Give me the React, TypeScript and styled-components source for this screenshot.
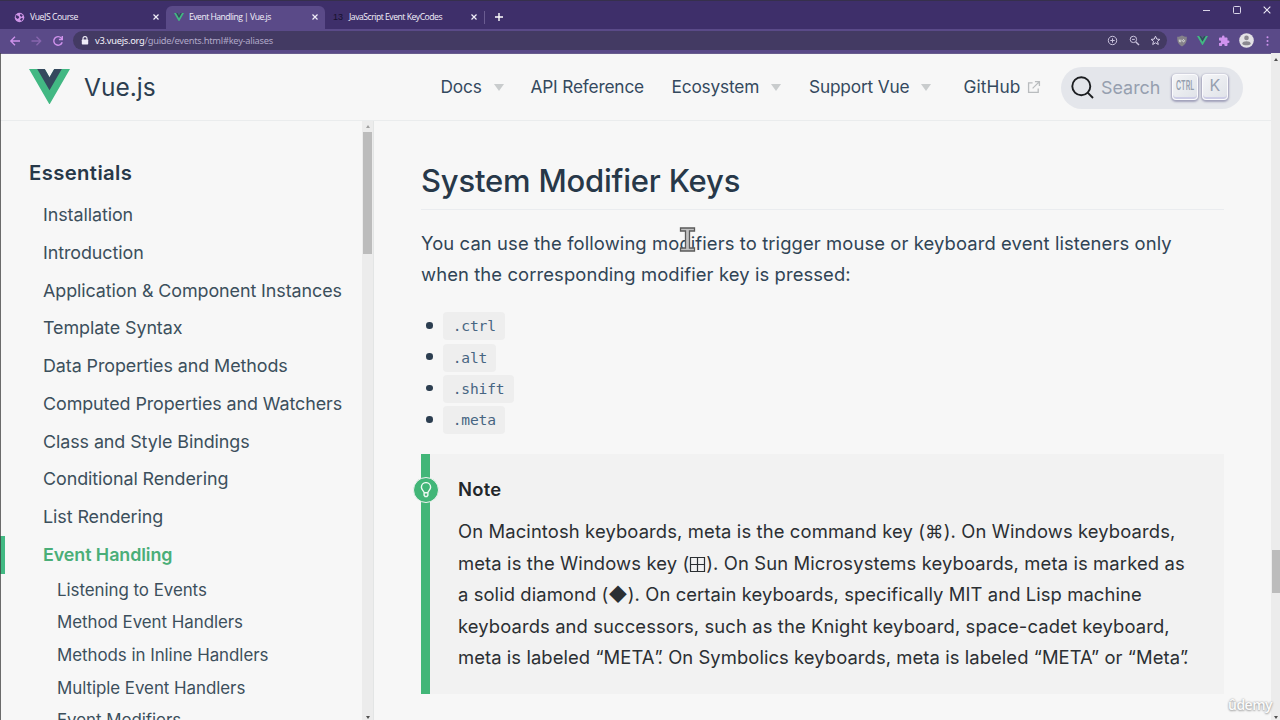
import React from "react";
import styled, { createGlobalStyle } from "styled-components";

const Global = createGlobalStyle`
  * { box-sizing: border-box; }
  html, body { margin: 0; padding: 0; }
  body { font-family: Inter, "Liberation Sans", sans-serif; color: #304455; background: #f7f7f7; overflow: hidden; }
`;

const Window = styled.div`
  width: 1280px;
  height: 720px;
  display: flex;
  flex-direction: column;
  overflow: hidden;
  position: relative;
  background: #f7f7f7;
`;

/* Browser chrome */
const TabStrip = styled.div`
  height: 29px;
  flex: none;
  display: flex;
  align-items: flex-end;
  padding-left: 6px;
  background: #3e2f6a;
  border-top: 1px solid #36304c;
  font-family: "Open Sans", sans-serif;
`;
const Tab = styled.div<{ $active?: boolean; $w: number }>`
  width: ${(p) => p.$w}px;
  height: 23px;
  display: flex;
  align-items: center;
  padding: 0 7px 1px 8px;
  border-radius: 6px 6px 0 0;
  color: #f4f1fb;
  background: ${(p) => (p.$active ? "#5a4a88" : "transparent")};
  svg { flex: none; display: block; }
`;
const TabTitle = styled.span<{ $ls: number }>`
  flex: 1;
  margin-left: 5px;
  font-size: 8.6px;
  line-height: 14px;
  letter-spacing: ${(p) => p.$ls}px;
  white-space: nowrap;
`;
const TabNumber = styled.span`
  width: 11px;
  font: 9px "Liberation Sans", sans-serif;
  color: #17112e;
`;
const Divider = styled.div`
  width: 1px;
  height: 13px;
  margin: 0 10px 5px 0;
  background: #6a5c91;
`;
const NewTab = styled.div`
  height: 23px;
  display: flex;
  align-items: center;
  padding-bottom: 1px;
`;
const WindowButtons = styled.div`
  margin-left: auto;
  display: flex;
  align-items: center;
  gap: 22px;
  height: 18px;
  margin-bottom: 10px;
  padding-right: 9.5px;
`;
const Toolbar = styled.div`
  height: 25px;
  flex: none;
  display: flex;
  align-items: center;
  padding: 0 6px 1px 8px;
  background: #5a4a88;
  border-bottom: 1px solid #685c8d;
  svg { flex: none; display: block; }
`;
const NavButtons = styled.div`
  display: flex;
  gap: 8px;
  width: 65px;
`;
const AddressBar = styled.div`
  width: 1094px;
  height: 19px;
  border-radius: 10px;
  background: #433a63;
  display: flex;
  align-items: center;
  padding: 0 6px 0 8px;
`;
const Url = styled.span`
  margin-left: 6px;
  font: 9.3px/14px "Noto Sans", sans-serif;
  letter-spacing: -0.26px;
  color: #b0a8c8;
  b { font-weight: 400; color: #f6f4fb; }
`;
const AddressIcons = styled.div`
  margin-left: auto;
  display: flex;
  align-items: center;
  gap: 10.4px;
`;
const Extensions = styled.div`
  margin-left: 9px;
  display: flex;
  align-items: center;
  gap: 9.3px;
`;

/* Site header */
const Header = styled.header`
  height: 67px;
  flex: none;
  display: flex;
  border-bottom: 1px solid #eaeced;
  margin-right: 9px;
  padding-left: 29px;
  align-items: center;
`;
const Brand = styled.div`
  display: flex;
  align-items: center;
  gap: 14px;
  width: 411.5px;
  svg { display: block; margin-top: -1px; }
`;
const BrandName = styled.span`
  font-size: 24.5px;
  font-weight: 400;
  line-height: 32px;
  color: #2c3e50;
  letter-spacing: 0;
`;
const NavItem = styled.div<{ $w: number }>`
  width: ${(p) => p.$w}px;
  display: flex;
  align-items: center;
  font-size: 17.3px;
  line-height: 26px;
  color: #34495e;
  white-space: nowrap;
`;
const NavLabel = styled.span<{ $ls?: number }>`
  letter-spacing: ${(p) => p.$ls ?? -0.18}px;
`;
const Caret = styled.i`
  margin-left: 12px;
  border: 5px solid transparent;
  border-top: 7px solid #c9cccd;
  border-bottom: 0;
`;
const Search = styled.div`
  width: 182px;
  height: 42px;
  margin-top: 1px;
  border-radius: 21px;
  background: #e4e6eb;
  display: flex;
  align-items: center;
  padding-left: 10px;
  svg { display: block; }
`;
const SearchText = styled.span`
  margin-left: 7.5px;
  width: 71px;
  font-size: 17.9px;
  line-height: 26px;
  letter-spacing: 0;
  color: #969faf;
`;
const Key = styled.kbd<{ $narrow?: boolean }>`
  width: 25.5px;
  height: 26px;
  margin: -2px 4.5px 0 0;
  display: flex;
  align-items: center;
  justify-content: center;
  border-radius: 4px;
  border: 1px solid #fbfbfd;
  background: linear-gradient(-45deg, #dfe2e8, #f4f5f7);
  box-shadow: inset 0 -2px 0 #cdcde6, 0 1px 2px 1px rgba(70, 66, 120, 0.42);
  color: #969faf;
  font-family: Inter, sans-serif;
  font-size: ${(p) => (p.$narrow ? 10 : 16)}px;
  font-weight: ${(p) => (p.$narrow ? 600 : 400)};
  span { display: block; margin-top: -4px; transform: ${(p) => (p.$narrow ? "scale(0.7, 1.25)" : "none")}; }
`;

/* Page body */
const Body = styled.div`
  flex: 1;
  min-height: 0;
  display: flex;
`;
const Sidebar = styled.aside`
  width: 362px;
  flex: none;
  overflow: hidden;
  padding-top: 36px;
`;
const SideTitle = styled.h3`
  margin: 0 0 7px 29px;
  height: 32px;
  font-size: 20.3px;
  line-height: 32px;
  font-weight: 600;
  letter-spacing: 0.38px;
  color: #273849;
`;
const SideLink = styled.div<{ $active?: boolean }>`
  height: 37.77px;
  line-height: 37.77px;
  padding-left: ${(p) => (p.$active ? 38 : 43)}px;
  border-left: ${(p) => (p.$active ? "5px solid #42b983" : "0")};
  font-size: 17.9px;
  font-weight: ${(p) => (p.$active ? 600 : 400)};
  letter-spacing: -0.08px;
  color: ${(p) => (p.$active ? "#4aae78" : "#3c4f5c")};
  white-space: nowrap;
`;
const SubLink = styled.div`
  height: 32.7px;
  line-height: 32.7px;
  padding-left: 57px;
  font-size: 16.9px;
  letter-spacing: -0.04px;
  color: #3c4f5c;
  white-space: nowrap;
`;
const SideScroll = styled.div`
  width: 12px;
  flex: none;
  background: #ececec;
  border-right: 1px solid #e3e5e5;
  display: flex;
  flex-direction: column;
  align-items: center;
  padding: 4px 0 1px;
`;
const Thumb = styled.div<{ $h: number; $w: number }>`
  width: ${(p) => p.$w}px;
  height: ${(p) => p.$h}px;
  background: #bcbcbc;
`;
const Arrow = styled.i<{ $down?: boolean; $dark?: boolean }>`
  width: 0;
  height: 0;
  border-left: 2.5px solid transparent;
  border-right: 2.5px solid transparent;
  ${(p) => (p.$down ? "border-top" : "border-bottom")}: 3px solid ${(p) => (p.$dark ? "#505050" : "#a0a0a0")};
`;
const PageScroll = styled.div`
  position: absolute;
  right: 0;
  top: 53px;
  bottom: 0;
  width: 9px;
  background: #ececec;
  display: flex;
  flex-direction: column;
  align-items: center;
  padding: 5px 0 1px;
`;
const Spacer = styled.div<{ $h?: number }>`
  ${(p) => (p.$h ? `height: ${p.$h}px;` : "flex: 1;")}
`;
const Main = styled.main`
  width: 850px;
  padding: 37px 0 0 47px;
`;
const Heading = styled.h2`
  margin: 0;
  height: 52px;
  border-bottom: 1px solid #eaecef;
  font-size: 31px;
  line-height: 46px;
  font-weight: 500;
  letter-spacing: -0.2px;
  color: #273849;
`;
const Para = styled.div`
  margin-top: 18px;
  color: #304455;
`;
const Line = styled.div<{ $ls?: number }>`
  height: 31.35px;
  line-height: 31.35px;
  font-size: 18.4px;
  letter-spacing: ${(p) => p.$ls ?? 0.11}px;
  white-space: nowrap;
`;
const TightQuote = styled.span`
  letter-spacing: -5.2px;
`;
const List = styled.ul`
  list-style: none;
  margin: 20px 0 0;
  padding: 0;
`;
const Item = styled.li`
  height: 31.3px;
  display: flex;
  align-items: center;
  padding-left: 5px;
  &::before {
    content: "";
    width: 6.6px;
    height: 6.6px;
    margin: -2px 10.9px 0 0;
    border-radius: 50%;
    background: #2c3e50;
  }
`;
const Code = styled.code`
  height: 28px;
  line-height: 28px;
  padding: 0 9.2px;
  border-radius: 4px;
  background: #eeeeee;
  font-family: "DejaVu Sans Mono", monospace;
  font-size: 14.6px;
  letter-spacing: -0.15px;
  color: #476582;
`;
const Note = styled.section`
  position: relative;
  margin-top: 18.1px;
  height: 240px;
  padding: 19px 0 0 28px;
  border-left: 9.5px solid #42b678;
  background: #f2f2f2;
  color: #2b2f33;
`;
const NoteTitle = styled.div`
  height: 34px;
  line-height: 34px;
  margin: -0.5px 0 10px;
  font-size: 18.4px;
  font-weight: 600;
  letter-spacing: 0.25px;
  color: #22262a;
`;
const NoteBadge = styled.div`
  position: absolute;
  left: -17.5px;
  top: 23px;
  width: 26px;
  height: 26px;
  border-radius: 50%;
  border: 1.5px solid #f2f2f2;
  background: #42b678;
  display: flex;
  align-items: center;
  justify-content: center;
`;
const SquareGlyph = styled.svg`
  width: 17px;
  height: 17px;
  vertical-align: -3px;
`;
const ExternalIcon = styled.svg`
  margin-left: 7px;
`;
const Cursor = styled.svg`
  position: absolute;
  left: 679px;
  top: 226px;
`;
const Watermark = styled.div`
  position: absolute;
  left: 1228px;
  top: 695px;
  font: 600 14px/20px "Open Sans", sans-serif;
  letter-spacing: -0.5px;
  color: #fbfbfb;
  text-shadow: 0 0 2px #999, 0 1px 2px #aaa;
`;
const WindowEdge = styled.div`
  position: absolute;
  left: 0;
  top: 53px;
  bottom: 0;
  width: 1px;
  background: rgba(60, 60, 60, 0.75);
`;

const VueLogo = ({ size }: { size: number }) => (
  <svg width={size} height={size * 0.866} viewBox="0 0 196.32 170.02">
    <path fill="#42b883" d="M120.83 0 98.16 39.26 75.49 0H0l98.16 170.02L196.32 0z" />
    <path fill="#35495e" d="M120.83 0 98.16 39.26 75.49 0H39.26l58.9 102.01L157.06 0z" />
  </svg>
);
const CloseX = ({ size = 6 }: { size?: number }) => (
  <svg width={size} height={size} viewBox="0 0 6 6" stroke="#f0edf8" strokeWidth={size > 7 ? 0.8 : 1.2}>
    <path d="M.5.5l5 5M5.5.5l-5 5" />
  </svg>
);

const links = [
  "Installation",
  "Introduction",
  "Application & Component Instances",
  "Template Syntax",
  "Data Properties and Methods",
  "Computed Properties and Watchers",
  "Class and Style Bindings",
  "Conditional Rendering",
  "List Rendering",
];
const subLinks = [
  "Listening to Events",
  "Method Event Handlers",
  "Methods in Inline Handlers",
  "Multiple Event Handlers",
  "Event Modifiers",
];

export default function App() {
  return (
    <Window>
      <Global />
      <TabStrip>
        <Tab $w={160}>
          <svg width="11" height="11" viewBox="0 0 12 12">
            <circle cx="6" cy="6" r="5.2" fill="#cf94e8" />
            <path d="M2 3.4l3 1 .6 1.8-1.7 1.4-2-1.5zM7 2l2.6 1.5L8.2 5.4 6.5 4zM6.5 8l2-1.8 1.4 1.2-2 2.3z" fill="#3e2f6a" />
          </svg>
          <TabTitle $ls={-0.4}>VueJS Course</TabTitle>
          <CloseX />
        </Tab>
        <Tab $w={159} $active>
          <VueLogo size={10} />
          <TabTitle $ls={-0.5}>Event Handling | Vue.js</TabTitle>
          <CloseX />
        </Tab>
        <Tab $w={159}>
          <TabNumber>13</TabNumber>
          <TabTitle $ls={-0.47}>JavaScript Event KeyCodes</TabTitle>
          <CloseX />
        </Tab>
        <Divider />
        <NewTab>
          <svg width="8" height="8" viewBox="0 0 8 8" stroke="#fff" strokeWidth="1.4">
            <path d="M4 0v8M0 4h8" />
          </svg>
        </NewTab>
        <WindowButtons>
          <svg width="8" height="8" stroke="#d9d4e8"><path d="M0 4.5h7" /></svg>
          <svg width="8" height="8" stroke="#d9d4e8" fill="none"><rect x=".5" y=".5" width="7" height="7" rx="1" /></svg>
          <CloseX size={8} />
        </WindowButtons>
      </TabStrip>
      <Toolbar>
        <NavButtons>
          <svg width="14" height="12" viewBox="0 0 14 12" fill="none" stroke="#cf92ec" strokeWidth="1.3"><path d="M12 6H3M7 1.8L2.8 6 7 10.2" /></svg>
          <svg width="14" height="12" viewBox="0 0 14 12" fill="none" stroke="#8866ae" strokeWidth="1.3"><path d="M1.5 6h9M6.5 1.8L10.7 6l-4.2 4.2" /></svg>
          <svg width="12" height="12" viewBox="0 0 12 12" fill="none" stroke="#cf92ec" strokeWidth="1.4"><path d="M10.2 7.2A4.3 4.3 0 1 1 9.3 3L10 3.9" /><path d="M10.3 1v3.5H6.9" /></svg>
        </NavButtons>
        <AddressBar>
          <svg width="8" height="9" viewBox="0 0 8 9"><path d="M2 4V2.6a2 2 0 0 1 4 0V4" fill="none" stroke="#f0edf8" strokeWidth="1.1" /><rect x=".8" y="3.5" width="6.4" height="5" rx=".7" fill="#f0edf8" /></svg>
          <Url><b>v3.vuejs.org</b>/guide/events.html#key-aliases</Url>
          <AddressIcons>
            <svg width="11" height="11" viewBox="0 0 11 11" fill="none" stroke="#c9c2dc" strokeWidth="1"><circle cx="5.5" cy="5.5" r="4.2" /><path d="M5.5 3.3v4.4M3.3 5.5h4.4" /></svg>
            <svg width="11" height="11" viewBox="0 0 11 11" fill="none" stroke="#c9c2dc" strokeWidth="1"><circle cx="4.4" cy="4.4" r="3.2" /><path d="M6.9 6.9L10 10" strokeWidth="1.4" /><path d="M3 4.4h2.8" /></svg>
            <svg width="11" height="11" viewBox="0 0 11 11" fill="none" stroke="#d5cfe6" strokeWidth="1"><path d="M5.5 1.2l1.3 2.9 3.1.3-2.4 2 .8 3.1-2.8-1.7-2.8 1.7.8-3.1-2.4-2 3.1-.3z" /></svg>
          </AddressIcons>
        </AddressBar>
        <Extensions>
          <svg width="12" height="12" viewBox="0 0 12 12"><path d="M6 .5c1.6 1 3 1.3 4.8 1.3 0 5-.5 7.2-4.8 9.7C1.7 9 1.2 6.8 1.2 1.8 3 1.8 4.4 1.5 6 .5z" fill="#85828a" /><path d="M3.3 4.6v1.5q0 .8.8.8t.8-.8V4.6M7.5 4.7a1.05 1.05 0 1 0 .01 0" stroke="#e4e4e4" strokeWidth=".9" fill="none" /></svg>
          <VueLogo size={11} />
          <svg width="12" height="12" viewBox="0 0 24 24" fill="#d092ee"><path d="M20.5 11H19V7c0-1.1-.9-2-2-2h-4V3.5a2.5 2.5 0 0 0-5 0V5H4c-1.1 0-2 .9-2 2v3.8h1.5a2.7 2.7 0 0 1 0 5.4H2V20c0 1.1.9 2 2 2h3.8v-1.5a2.7 2.7 0 0 1 5.4 0V22H17c1.1 0 2-.9 2-2v-4h1.5a2.5 2.5 0 0 0 0-5z" /></svg>
          <svg width="15" height="15" viewBox="0 0 15 15"><circle cx="7.5" cy="7.5" r="7.3" fill="#e3e1e5" /><circle cx="7.5" cy="4.9" r="2.3" fill="#8b8890" /><path d="M3.2 10.7c0-3.3 8.6-3.3 8.6 0-1.2 2.2-7.4 2.2-8.6 0z" fill="#8b8890" /></svg>
          <svg width="10" height="12" viewBox="0 0 10 12" fill="#cf92ec"><circle cx="4.5" cy="2.2" r="1" /><circle cx="4.5" cy="6" r="1" /><circle cx="4.5" cy="9.8" r="1" /></svg>
        </Extensions>
      </Toolbar>

      <Header>
        <Brand>
          <VueLogo size={41} />
          <BrandName>Vue.js</BrandName>
        </Brand>
        <NavItem $w={90}><NavLabel>Docs</NavLabel><Caret /></NavItem>
        <NavItem $w={141}><NavLabel>API Reference</NavLabel></NavItem>
        <NavItem $w={137.5}><NavLabel>Ecosystem</NavLabel><Caret /></NavItem>
        <NavItem $w={154.5}><NavLabel>Support Vue</NavLabel><Caret /></NavItem>
        <NavItem $w={97}>
          <NavLabel $ls={0.1}>GitHub</NavLabel>
          <ExternalIcon width="14" height="14" viewBox="0 0 15 15" fill="none" stroke="#b9bcbe" strokeWidth="1.4"><path d="M6 3H1.7v10.3H12V9M8.5 1.7h4.8v4.8M13 2L6 9" /></ExternalIcon>
        </NavItem>
        <Search>
          <svg width="23" height="23" viewBox="0 0 23 23" fill="none" stroke="#1c1e21" strokeWidth="1.9"><circle cx="10.3" cy="10.3" r="9" /><path d="M16.7 16.7l5.3 5.3" /></svg>
          <SearchText>Search</SearchText>
          <Key $narrow><span>CTRL</span></Key>
          <Key><span>K</span></Key>
        </Search>
      </Header>

      <Body>
        <Sidebar>
          <SideTitle>Essentials</SideTitle>
          {links.map((text) => (
            <SideLink key={text}>{text}</SideLink>
          ))}
          <SideLink $active>Event Handling</SideLink>
          {subLinks.map((text) => (
            <SubLink key={text}>{text}</SubLink>
          ))}
        </Sidebar>
        <SideScroll>
          <Arrow />
          <Spacer $h={4} />
          <Thumb $w={9} $h={122} />
          <Spacer />
          <Arrow $down $dark />
        </SideScroll>
        <Main>
          <Heading>System Modifier Keys</Heading>
          <Para>
            <Line>You can use the following modifiers to trigger mouse or keyboard event listeners only</Line>
            <Line>when the corresponding modifier key is pressed:</Line>
          </Para>
          <List>
            {[".ctrl", ".alt", ".shift", ".meta"].map((k) => (
              <Item key={k}><Code>{k}</Code></Item>
            ))}
          </List>
          <Note>
            <NoteBadge>
              <svg width="12" height="16" viewBox="0 0 12 17" fill="none" stroke="#eefaf3" strokeWidth="1.5"><path d="M4 11.5c0-2-2.9-2.9-2.9-5.9a4.9 4.9 0 0 1 9.8 0c0 3-2.9 3.9-2.9 5.9zM4 11.5v2.7l1 1.2h2l1-1.2v-2.7" /></svg>
            </NoteBadge>
            <NoteTitle>Note</NoteTitle>
            <Line $ls={0.125}>On Macintosh keyboards, meta is the command key (⌘). On Windows keyboards,</Line>
            <Line $ls={0.125}>
              meta is the Windows key (
              <SquareGlyph viewBox="0 0 17 17" fill="none" stroke="#2b2f33" strokeWidth="1.2"><path d="M1.5 1.5h14v14h-14zM8.5 1.5v14M1.5 8.5h14" /></SquareGlyph>
              ). On Sun Microsystems keyboards, meta is marked as
            </Line>
            <Line $ls={0.095}>a solid diamond (◆). On certain keyboards, specifically MIT and Lisp machine</Line>
            <Line $ls={0.115}>keyboards and successors, such as the Knight keyboard, space-cadet keyboard,</Line>
            <Line $ls={0.08}>
              meta is labeled “META<TightQuote>”</TightQuote>. On Symbolics keyboards, meta is labeled “META” or “Meta<TightQuote>”</TightQuote>.
            </Line>
          </Note>
        </Main>
      </Body>

      <PageScroll>
        <Arrow $dark />
        <Spacer $h={489} />
        <Thumb $w={8} $h={43} />
        <Spacer />
        <Arrow $down $dark />
      </PageScroll>
      <WindowEdge />
      <Cursor width="17" height="27" viewBox="0 0 17 27">
        <path d="M1.5 2h14v3h-5v17h5v3h-14v-3h5V5h-5z" fill="#c2c2c2" stroke="#5b5b5b" strokeWidth="1.3" />
      </Cursor>
      <Watermark>ûdemy</Watermark>
    </Window>
  );
}
